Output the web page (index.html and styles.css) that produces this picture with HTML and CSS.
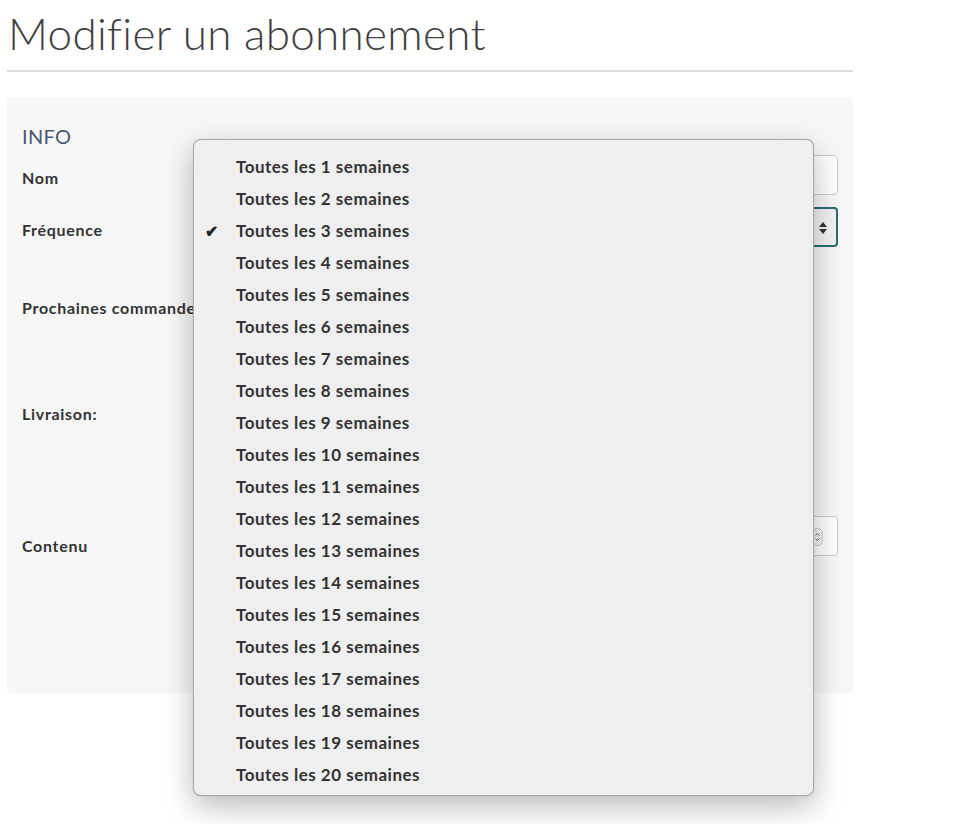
FILE: index.html
```html
<!DOCTYPE html>
<html lang="fr">
<head>
<meta charset="utf-8">
<title>Modifier un abonnement</title>
<link rel="stylesheet" href="styles.css">
</head>
<body>
<div class="page">
  <h1 class="title">Modifier un abonnement</h1>
  <hr class="rule">
  <div class="panel">
    <div class="section">INFO</div>
    <div class="row row-nom">
      <label class="label">Nom</label>
      <div class="field"><div class="input"></div></div>
    </div>
    <div class="row row-freq">
      <label class="label">Fréquence</label>
      <div class="field">
        <div class="select">
          <svg class="arrows" width="10" height="14" viewBox="0 0 10 14"><path d="M5 1 L9 6 H1 Z" fill="#333"/><path d="M5 13 L9 8 H1 Z" fill="#333"/></svg>
        </div>
      </div>
    </div>
    <div class="row row-next">
      <label class="label">Prochaines commandes</label>
      <div class="field"></div>
    </div>
    <div class="row row-liv">
      <label class="label">Livraison:</label>
      <div class="field"></div>
    </div>
    <div class="row row-cont">
      <label class="label label-cont">Contenu</label>
      <div class="field">
        <div class="input">
          <span class="spin"><svg width="7" height="12" viewBox="0 0 7 12"><path d="M1.5 4.5 L3.5 2.5 L5.5 4.5 M1.5 7.5 L3.5 9.5 L5.5 7.5" stroke="#666" stroke-width="1" fill="none"/></svg></span>
        </div>
      </div>
    </div>
  </div>

  <ul class="menu">
    <li>Toutes les 1 semaines</li>
    <li>Toutes les 2 semaines</li>
    <li class="checked">Toutes les 3 semaines</li>
    <li>Toutes les 4 semaines</li>
    <li>Toutes les 5 semaines</li>
    <li>Toutes les 6 semaines</li>
    <li>Toutes les 7 semaines</li>
    <li>Toutes les 8 semaines</li>
    <li>Toutes les 9 semaines</li>
    <li>Toutes les 10 semaines</li>
    <li>Toutes les 11 semaines</li>
    <li>Toutes les 12 semaines</li>
    <li>Toutes les 13 semaines</li>
    <li>Toutes les 14 semaines</li>
    <li>Toutes les 15 semaines</li>
    <li>Toutes les 16 semaines</li>
    <li>Toutes les 17 semaines</li>
    <li>Toutes les 18 semaines</li>
    <li>Toutes les 19 semaines</li>
    <li>Toutes les 20 semaines</li>
  </ul>
</div>
</body>
</html>
```

FILE: styles.css
```css
html, body {
  margin: 0;
  padding: 0;
  background: #ffffff;
  min-height: 824px;
}

.page {
  position: relative;
  width: 846px;
  min-height: 820px;
  padding: 0 0 0 7px;
  font-family: "Lato", "Liberation Sans", sans-serif;
  color: #333;
}

.title {
  margin: 0;
  padding: 6px 0 0 1px;
  height: 58px;
  font-family: "Lato", sans-serif;
  font-weight: 300;
  font-size: 44px;
  line-height: 54px;
  color: #3f3f3f;
  letter-spacing: 0.3px;
}

.rule {
  margin: 6px 0 0 0;
  border: 0;
  height: 2px;
  background: #dddddd;
}

.panel {
  margin-top: 25px;
  background: #f7f7f7;
  border-radius: 4px;
  height: 596px;
  padding: 0 15px 0 15px;
  box-sizing: border-box;
}

.section {
  padding-top: 28px;
  height: 30px;
  font-size: 20px;
  font-weight: 400;
  line-height: 22px;
  color: #4a5870;
  letter-spacing: 0.3px;
}

.row {
  display: flex;
}

.label {
  width: 186px;
  padding-top: 15px;
  font-family: "Lato", sans-serif;
  font-weight: 700;
  font-size: 16px;
  line-height: 16px;
  color: #333;
  letter-spacing: 0.7px;
  white-space: nowrap;
}

.label-cont {
  padding-top: 22px;
}

.field {
  flex: 1;
}

.row-nom { height: 52px; }
.row-freq { height: 78px; }
.row-next { height: 106px; }
.row-liv { height: 125px; }
.row-cont { height: 40px; }

.input, .select {
  position: relative;
  height: 40px;
  box-sizing: border-box;
  border: 1px solid #c9c9c9;
  border-radius: 4px;
  background: #ffffff;
}

.select {
  border: 2px solid #2c6c72;
  background: #f2f2f2;
}

.arrows {
  position: absolute;
  right: 8px;
  top: 12px;
}

.spin {
  position: absolute;
  right: 14px;
  top: 11px;
  width: 9px;
  height: 16px;
  border: 1px solid #cfcfcf;
  border-radius: 5px;
  display: flex;
  align-items: center;
  justify-content: center;
  background: #f4f4f4;
}

.menu {
  position: absolute;
  left: 193px;
  top: 139px;
  width: 621px;
  height: 657px;
  box-sizing: border-box;
  margin: 0;
  padding: 11px 0 0 0;
  list-style: none;
  background: #efefef;
  border: 1px solid #a9a9a9;
  border-radius: 8px;
  box-shadow: 0 10px 30px rgba(0, 0, 0, 0.28), 0 0 1px rgba(0,0,0,0.3);
  z-index: 10;
}

.menu li {
  position: relative;
  height: 32px;
  line-height: 32px;
  padding-left: 42px;
  font-family: "Lato", sans-serif;
  font-weight: 700;
  font-size: 17px;
  letter-spacing: 0.5px;
  color: #333;
}

.menu li.checked::before {
  content: "\2714";
  position: absolute;
  left: 11px;
  top: 0;
  font-size: 16px;
  letter-spacing: 0;
  color: #222;
}
```
